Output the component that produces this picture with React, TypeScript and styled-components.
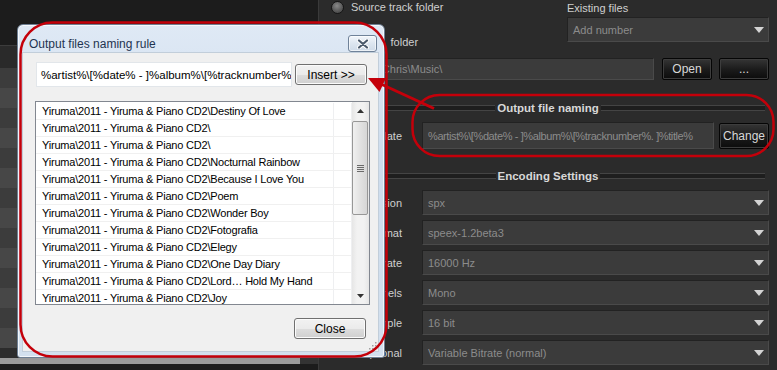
import React from 'react';
import styled, { createGlobalStyle, css } from 'styled-components';

const GlobalStyle = createGlobalStyle`
  html, body { margin: 0; padding: 0; background: #1e1e1e; }
  body { font-family: 'Liberation Sans', Arial, sans-serif; }
  * { box-sizing: border-box; }
`;

const PREFIX = 'Yiruma\\2011 - Yiruma & Piano CD2\\';
const TRACKS = [
  'Destiny Of Love',
  '',
  '',
  'Nocturnal Rainbow',
  'Because I Love You',
  'Poem',
  'Wonder Boy',
  'Fotografia',
  'Elegy',
  'One Day Diary',
  'Lord\u2026 Hold My Hand',
  'Joy',
];

const SETTINGS = [
  { label: 'Extension', value: 'spx' },
  { label: 'Format', value: 'speex-1.2beta3' },
  { label: 'Sample rate', value: '16000 Hz' },
  { label: 'Channels', value: 'Mono' },
  { label: 'Bits per sample', value: '16 bit' },
  { label: 'Optional', value: 'Variable Bitrate (normal)' },
];

const TEMPLATE = '%artist%\\[%date% - ]%album%\\[%tracknumber%. ]%title%';

const App = () => (
  <Screen>
    <GlobalStyle />
    <LeftPanel>
      <Toolbar />
      <GridHeader />
      {Array.from({ length: 14 }).map((_, i) => (
        <GridRow key={i} odd={i % 2 === 1} />
      ))}
      <GridGap />
      <HScroll>
        <HThumb />
      </HScroll>
      <Filler />
    </LeftPanel>
    <Divider />
    <RightPanel>
      <TopArea>
        <div>
          <RadioRow>
            <Radio />
            <Label>Source track folder</Label>
          </RadioRow>
          <RadioRow second>
            <Radio />
            <Label wide>Other folder</Label>
          </RadioRow>
        </div>
        <div>
          <FieldLabel>Existing files</FieldLabel>
          <Select>
            <span>Add number</span>
            <Caret />
          </Select>
        </div>
      </TopArea>
      <PathRow>
        <PathInput>C:\Users\Chris\Music\</PathInput>
        <DarkButton>Open</DarkButton>
        <DarkButton gap={7}>...</DarkButton>
      </PathRow>
      <Heading top={20}>
        <span>Output file naming</span>
      </Heading>
      <FormRow top={6}>
        <RowLabel>Template</RowLabel>
        <TemplateField>
          <TemplateInput>{TEMPLATE}</TemplateInput>
          <DarkButton gap={5} tall>
            Change
          </DarkButton>
        </TemplateField>
      </FormRow>
      <Heading top={19}>
        <span>Encoding Settings</span>
      </Heading>
      {SETTINGS.map((s, i) => (
        <FormRow key={s.label} top={i === 0 ? 6 : 5}>
          <RowLabel>{s.label}</RowLabel>
          <Select>
            <span>{s.value}</span>
            <Caret />
          </Select>
        </FormRow>
      ))}
    </RightPanel>

    <Dialog>
      <Caption>
        <Title>Output files naming rule</Title>
        <CloseX>
          <svg width="12" height="10" viewBox="0 0 12 10">
            <path d="M2 1.5 L10 8.5 M10 1.5 L2 8.5" stroke="#fff" strokeWidth="4" strokeLinecap="round" />
            <path d="M2 1.5 L10 8.5 M10 1.5 L2 8.5" stroke="#4b5a6c" strokeWidth="2.2" strokeLinecap="round" />
          </svg>
        </CloseX>
      </Caption>
      <Client>
        <InputRow>
          <NameInput>%artist%\[%date% - ]%album%\[%tracknumber%. ]%title%</NameInput>
          <WinButton gap={3}>Insert &gt;&gt;</WinButton>
        </InputRow>
        <ListBox>
          <ListBody>
            {TRACKS.map((t, i) => (
              <ListRow key={i}>
                <Cell>{PREFIX + t}</Cell>
                <Cell />
              </ListRow>
            ))}
          </ListBody>
          <VScroll>
            <ScrollArrow>
              <svg width="7" height="4" viewBox="0 0 7 4">
                <path d="M0 4 L3.5 0 L7 4 Z" fill="#333" />
              </svg>
            </ScrollArrow>
            <Thumb>
              <Grip />
            </Thumb>
            <Track />
            <ScrollArrow>
              <svg width="7" height="4" viewBox="0 0 7 4">
                <path d="M0 0 L3.5 4 L7 0 Z" fill="#333" />
              </svg>
            </ScrollArrow>
          </VScroll>
        </ListBox>
        <Footer>
          <WinButton>Close</WinButton>
          <SizeGrip>
            <svg width="9" height="9" viewBox="0 0 9 9">
              {[
                [7, 1],
                [4, 4],
                [7, 4],
                [1, 7],
                [4, 7],
                [7, 7],
              ].map(([x, y]) => (
                <rect key={`${x}-${y}`} x={x} y={y} width="1.5" height="1.5" fill="#a0a0a0" />
              ))}
            </svg>
          </SizeGrip>
        </Footer>
      </Client>
    </Dialog>

    <Annotations width="777" height="370" viewBox="0 0 777 370">
      <rect x="20.5" y="22.5" width="366" height="334" rx="32" fill="none" stroke="#c4000a" strokeWidth="2.5" />
      <rect x="412.5" y="95" width="361" height="61" rx="27" fill="none" stroke="#c4000a" strokeWidth="2.5" />
      <line x1="434" y1="108.5" x2="382" y2="84.5" stroke="#c4000a" strokeWidth="3" />
      <polygon points="368,78 386,78 379.5,92" fill="#c4000a" />
    </Annotations>
  </Screen>
);

export default App;

/* ---------- background app ---------- */

const Screen = styled.div`
  position: relative;
  width: 777px;
  height: 370px;
  overflow: hidden;
  display: flex;
  font-size: 11px;
`;

const LeftPanel = styled.div`
  width: 318px;
  display: flex;
  flex-direction: column;
  background: #1d1d1d;
`;

const Toolbar = styled.div`
  height: 45px;
  background: #1c1c1c;
`;

const GridHeader = styled.div`
  height: 23px;
  background: #2a2a2a;
  border-top: 1px solid #3c3c3c;
`;

const GridRow = styled.div<{ odd?: boolean }>`
  height: 20px;
  background: ${p => (p.odd ? '#474747' : '#3c3c3c')};
`;

const GridGap = styled.div`
  height: 10px;
  background: #2c2c2c;
`;

const HScroll = styled.div`
  height: 6px;
  display: flex;
  background: #333;
`;

const HThumb = styled.div`
  width: 300px;
  background: #9a9a9a;
`;

const Filler = styled.div`
  flex: 1;
  background: #1c1c1c;
`;

const Divider = styled.div`
  width: 1px;
  background: #3a3a3a;
`;

const RightPanel = styled.div`
  flex: 1;
  display: flex;
  flex-direction: column;
  padding: 0 8px 0 12px;
  background: #2b2b2b;
  color: #d2d2d2;
`;

const TopArea = styled.div`
  display: grid;
  grid-template-columns: 236px 1fr;
  height: 49px;
`;

const RadioRow = styled.div<{ second?: boolean }>`
  display: flex;
  align-items: center;
  height: 14px;
  margin-top: ${p => (p.second ? 21 : 0)}px;
`;

const Radio = styled.span`
  width: 13px;
  height: 13px;
  margin-right: 7px;
  border-radius: 50%;
  border: 1px solid #151515;
  background: radial-gradient(circle at 45% 35%, #8a8a8a, #5a5a5a 55%, #3c3c3c);
`;

const Label = styled.span<{ wide?: boolean }>`
  color: #cfcfcf;
  white-space: nowrap;
  word-spacing: ${p => (p.wide ? 9 : 0)}px;
`;

const FieldLabel = styled.div`
  height: 16px;
  line-height: 16px;
  color: #cfcfcf;
`;

const fieldBox = css`
  background: #3b3b3b;
  border: 1px solid #222;
  border-right-color: #4a4a4a;
  border-bottom-color: #4a4a4a;
  color: #8c8c8c;
  white-space: nowrap;
  overflow: hidden;
`;

const Select = styled.div`
  ${fieldBox};
  height: 25px;
  margin-top: 1px;
  display: flex;
  align-items: center;
  justify-content: space-between;
  padding: 0 4px 0 5px;
`;

const Caret = styled.span`
  width: 0;
  height: 0;
  border-left: 5px solid transparent;
  border-right: 5px solid transparent;
  border-top: 6px solid #d4d4d4;
`;

const PathRow = styled.div`
  display: flex;
  height: 22px;
  margin-top: 9px;
`;

const PathInput = styled.div`
  ${fieldBox};
  flex: 1;
  display: flex;
  align-items: center;
  padding-left: 4px;
`;

const DarkButton = styled.div<{ gap?: number; tall?: boolean }>`
  width: 50px;
  height: ${p => (p.tall ? 26 : 22)}px;
  margin-left: ${p => p.gap ?? 8}px;
  align-self: center;
  display: flex;
  align-items: center;
  justify-content: center;
  border: 1px solid #050505;
  border-radius: 2px;
  background: linear-gradient(#353535, #1a1a1a 55%, #0c0c0c);
  box-shadow: inset 0 0 0 1px #3d3d3d;
  color: #d8d8d8;
  font-size: 12px;
`;

const Heading = styled.div<{ top: number }>`
  display: flex;
  align-items: center;
  height: 16px;
  margin: ${p => p.top}px 4px 0 0;
  font-weight: bold;
  font-size: 11.5px;
  color: #d8d8d8;
  &::before,
  &::after {
    content: '';
    flex: 1;
    height: 4px;
    border-top: 1px solid #444;
    border-bottom: 1px solid #444;
    background: #1e1e1e;
  }
  span {
    padding: 0 2px;
  }
`;

const FormRow = styled.div<{ top: number }>`
  display: grid;
  grid-template-columns: 71px 1fr;
  column-gap: 20px;
  align-items: center;
  margin-top: ${p => p.top}px;
  > div:last-child {
    margin-top: 0;
  }
`;

const RowLabel = styled.div`
  display: flex;
  justify-content: flex-end;
  white-space: nowrap;
  color: #cfcfcf;
`;

const TemplateField = styled.div`
  display: flex;
  align-items: center;
`;

const TemplateInput = styled.div`
  ${fieldBox};
  flex: 1;
  height: 27px;
  display: flex;
  align-items: center;
  padding-left: 5px;
  letter-spacing: -0.4px;
`;

/* ---------- dialog ---------- */

const Dialog = styled.div`
  position: absolute;
  left: 17px;
  top: 24px;
  width: 368px;
  height: 334px;
  display: flex;
  flex-direction: column;
  border: 1px solid #6e7f93;
  border-radius: 6px 6px 3px 3px;
  background: linear-gradient(#dfe9f5, #cddced 40%, #d3e0ee);
  box-shadow: inset 0 0 0 1px rgba(255, 255, 255, 0.7);
`;

const Caption = styled.div`
  display: flex;
  align-items: center;
  height: 28px;
  padding: 9px 7px 0 11px;
`;

const Title = styled.div`
  font-size: 12px;
  color: #1f3450;
`;

const CloseX = styled.div`
  margin-left: auto;
  width: 29px;
  height: 17px;
  display: flex;
  align-items: center;
  justify-content: center;
  border: 1px solid #6f8299;
  border-radius: 3px;
  background: linear-gradient(#f2f6fb, #dde6f0 50%, #cfdbe8);
  box-shadow: inset 0 0 0 1px rgba(255, 255, 255, 0.6);
`;

const Client = styled.div`
  flex: 1;
  margin: 0 6px 6px 5px;
  padding: 9px 1px 0 12px;
  background: #f0f0f0;
  box-shadow: 0 0 0 1px #c2ceda;
  color: #000;
  font-size: 11px;
`;

const InputRow = styled.div`
  display: flex;
  align-items: center;
  height: 25px;
`;

const NameInput = styled.div`
  width: 256px;
  height: 25px;
  margin-left: 1px;
  padding-left: 4px;
  display: flex;
  align-items: center;
  overflow: hidden;
  white-space: nowrap;
  background: #fff;
  border: 1px solid #e2e6ea;
  font-size: 11.5px;
`;

const WinButton = styled.div<{ gap?: number }>`
  width: 72px;
  height: 21px;
  margin-left: ${p => p.gap ?? 0}px;
  display: flex;
  align-items: center;
  justify-content: center;
  border: 1px solid #707070;
  border-radius: 3px;
  background: linear-gradient(#f2f2f2, #ebebeb 50%, #dddddd 51%, #cfcfcf);
  box-shadow: inset 0 0 0 1px #fbfbfb;
  font-size: 12px;
`;

const ListBox = styled.div`
  display: flex;
  width: 335px;
  height: 204px;
  margin-top: 14px;
  border: 1px solid #828790;
  background: #fff;
`;

const ListBody = styled.div`
  width: 316px;
  overflow: hidden;
  padding-top: 1px;
`;

const ListRow = styled.div`
  display: grid;
  grid-template-columns: 298px 18px;
  height: 17px;
  border-bottom: 1px solid #f0f0f0;
`;

const Cell = styled.div`
  display: flex;
  align-items: center;
  padding-left: 6px;
  white-space: nowrap;
  overflow: hidden;
  border-right: 1px solid #eeeff1;
  letter-spacing: -0.2px;
`;

const VScroll = styled.div`
  width: 17px;
  display: flex;
  flex-direction: column;
  background: linear-gradient(90deg, #e6e6e6, #f2f2f2 30%, #f2f2f2 70%, #e6e6e6);
`;

const ScrollArrow = styled.div`
  height: 17px;
  display: flex;
  align-items: center;
  justify-content: center;
`;

const Thumb = styled.div`
  height: 94px;
  margin: 2px 1px 0 0;
  display: flex;
  align-items: center;
  justify-content: center;
  border: 1px solid #979797;
  border-radius: 2px;
  background: linear-gradient(90deg, #f0f0f0, #e2e2e2 50%, #d6d6d6);
`;

const Grip = styled.div`
  width: 7px;
  height: 7px;
  background: repeating-linear-gradient(#6a6a6a 0 1px, transparent 1px 2px);
`;

const Track = styled.div`
  flex: 1;
`;

const Footer = styled.div`
  display: flex;
  justify-content: flex-end;
  align-items: flex-start;
  margin-top: 13px;
`;

const SizeGrip = styled.div`
  width: 9px;
  height: 9px;
  margin: 22px 0 0 2px;
`;

const Annotations = styled.svg`
  position: absolute;
  left: 0;
  top: 0;
  pointer-events: none;
`;
